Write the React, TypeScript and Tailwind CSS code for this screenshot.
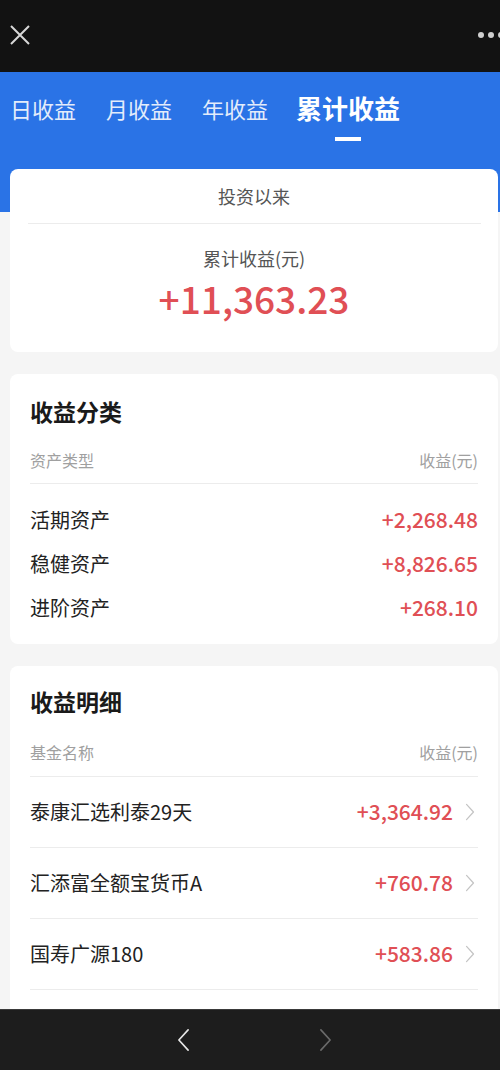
import React from "react";

const categories = [
  { name: "活期资产", value: "+2,268.48" },
  { name: "稳健资产", value: "+8,826.65" },
  { name: "进阶资产", value: "+268.10" },
];

const funds = [
  { name: "泰康汇选利泰29天", value: "+3,364.92" },
  { name: "汇添富全额宝货币A", value: "+760.78" },
  { name: "国寿广源180", value: "+583.86" },
];

const Chevron = ({ dir, className }: { dir: "left" | "right"; className?: string }) => (
  <svg width="14" height="26" viewBox="0 0 14 26" className={className} fill="none">
    <path
      d={dir === "right" ? "M2 2 L12 13 L2 24" : "M12 2 L2 13 L12 24"}
      stroke="currentColor"
      strokeWidth="1.8"
      strokeLinecap="round"
      strokeLinejoin="round"
    />
  </svg>
);

export default function App() {
  return (
    <div
      className="w-[500px] h-[1070px] flex flex-col overflow-hidden bg-[#f5f5f5]"
      style={{ fontFamily: '"Noto Sans CJK SC", "Noto Sans", sans-serif' }}
    >
      {/* top bar */}
      <div className="h-[72px] shrink-0 bg-[#121212] flex items-center justify-between pl-[9px]">
        <svg width="22" height="22" viewBox="0 0 22 22" className="text-[#d8d8d8] -mt-[2px]">
          <path d="M2 2 L20 20 M20 2 L2 20" stroke="currentColor" strokeWidth="2" />
        </svg>
        <div className="flex gap-[4px] mr-[-4px] -mt-[2px]">
          <span className="w-[6px] h-[6px] rounded-full bg-[#cfcfcf]" />
          <span className="w-[6px] h-[6px] rounded-full bg-[#cfcfcf]" />
          <span className="w-[6px] h-[6px] rounded-full bg-[#cfcfcf]" />
        </div>
      </div>

      <div className="flex-1 relative overflow-hidden">
        {/* blue band */}
        <div className="absolute top-0 left-0 right-0 h-[140px] bg-[#2a73e6]" />

        <div className="relative">
          {/* tabs */}
          <div className="h-[97px] flex items-start pt-[22px] pl-[10px]">
            <span className="text-[22px] leading-[28px] text-[#e3ecfb] mr-[30px]">日收益</span>
            <span className="text-[22px] leading-[28px] text-[#e3ecfb] mr-[30px]">月收益</span>
            <span className="text-[22px] leading-[28px] text-[#e3ecfb] mr-[28px]">年收益</span>
            <div className="flex flex-col items-center">
              <span className="text-[26px] leading-[28px] font-bold text-white">累计收益</span>
              <span className="mt-[15px] w-[26px] h-[4px] bg-white" />
            </div>
          </div>

          <div className="pl-[10px] pr-[2px] flex flex-col gap-[22px]">
            {/* summary card */}
            <div className="bg-white rounded-[8px] h-[183px] flex flex-col items-center">
              <div className="h-[55px] w-[453px] border-b border-[#ececec] flex items-center justify-center">
                <span className="text-[18px] text-[#555]">投资以来</span>
              </div>
              <span className="mt-[21px] text-[18px] leading-[26px] text-[#555]">累计收益(元)</span>
              <span className="mt-[5px] text-[37px] leading-[44px] font-medium text-[#e04f55]">
                +11,363.23
              </span>
            </div>

            {/* category card */}
            <div className="bg-white rounded-[8px] h-[270px] px-[20px]">
              <div className="pt-[24px] text-[23px] leading-[26px] font-bold text-[#1a1a1a]">收益分类</div>
              <div className="mt-[22px] h-[38px] border-b border-[#ececec] flex items-center justify-between text-[16px] text-[#a0a0a0]">
                <span className="-mt-[10px]">资产类型</span>
                <span className="-mt-[10px]">收益(元)</span>
              </div>
              <div className="pt-[23px] flex flex-col gap-[19px]">
                {categories.map((c) => (
                  <div key={c.name} className="flex items-center justify-between h-[25px]">
                    <span className="text-[20px] text-[#222]">{c.name}</span>
                    <span className="text-[21px] font-medium text-[#e04f55]">{c.value}</span>
                  </div>
                ))}
              </div>
            </div>

            {/* detail card */}
            <div className="bg-white rounded-t-[8px] px-[20px] pb-[40px]">
              <div className="pt-[22px] text-[23px] leading-[26px] font-bold text-[#1a1a1a]">收益明细</div>
              <div className="mt-[23px] h-[40px] border-b border-[#ececec] flex items-center justify-between text-[16px] text-[#a0a0a0]">
                <span className="-mt-[10px]">基金名称</span>
                <span className="-mt-[10px]">收益(元)</span>
              </div>
              {funds.map((f) => (
                <div
                  key={f.name}
                  className="h-[71px] border-b border-[#ececec] flex items-center justify-between"
                >
                  <span className="text-[20px] text-[#222]">{f.name}</span>
                  <div className="flex items-center gap-[12px] mr-[3px]">
                    <span className="text-[21px] font-medium text-[#e04f55]">{f.value}</span>
                    <Chevron dir="right" className="w-[10px] h-[18px] text-[#c4c4c4]" />
                  </div>
                </div>
              ))}
            </div>
          </div>
        </div>
      </div>

      {/* bottom bar */}
      <div className="h-[61px] shrink-0 bg-[#1d1d1d] border-t border-[#3a3a3a] flex items-center justify-center gap-[129px] pl-[8px]">
        <Chevron dir="left" className="w-[13px] h-[24px] text-[#e6e6e6]" />
        <Chevron dir="right" className="w-[13px] h-[24px] text-[#6a6a6a]" />
      </div>
    </div>
  );
}
